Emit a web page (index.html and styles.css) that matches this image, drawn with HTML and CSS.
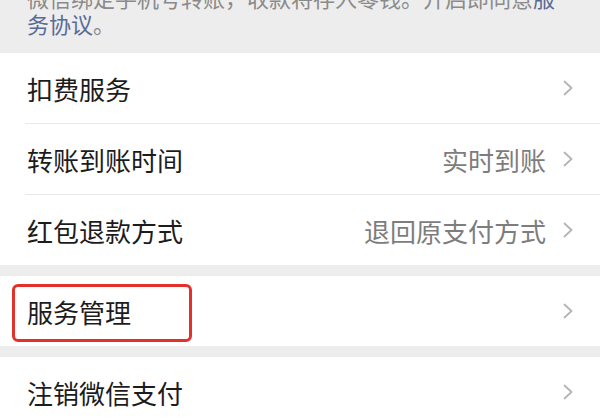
FILE: index.html
```html
<!DOCTYPE html>
<html lang="zh-CN">
<head>
<meta charset="utf-8">
<title>支付设置</title>
<link rel="stylesheet" href="styles.css">
</head>
<body>
<div class="page">
  <p class="tip">微信绑定手机号转账，收款将存入零钱。开启即同意<span class="link">服务协议</span>。</p>

  <div class="group">
    <div class="cell">
      <span class="title">扣费服务</span>
      <svg class="arrow" viewBox="0 0 10 16" width="10" height="16"><polyline points="1.5,1.5 8.5,8 1.5,14.5"/></svg>
    </div>
    <div class="cell">
      <span class="title">转账到账时间</span>
      <span class="value">实时到账</span>
      <svg class="arrow" viewBox="0 0 10 16" width="10" height="16"><polyline points="1.5,1.5 8.5,8 1.5,14.5"/></svg>
    </div>
    <div class="cell">
      <span class="title">红包退款方式</span>
      <span class="value">退回原支付方式</span>
      <svg class="arrow" viewBox="0 0 10 16" width="10" height="16"><polyline points="1.5,1.5 8.5,8 1.5,14.5"/></svg>
    </div>
  </div>

  <div class="group marked">
    <div class="cell">
      <span class="title">服务管理</span>
      <svg class="arrow" viewBox="0 0 10 16" width="10" height="16"><polyline points="1.5,1.5 8.5,8 1.5,14.5"/></svg>
    </div>
    <div class="highlight"></div>
  </div>

  <div class="group">
    <div class="cell">
      <span class="title">注销微信支付</span>
      <svg class="arrow" viewBox="0 0 10 16" width="10" height="16"><polyline points="1.5,1.5 8.5,8 1.5,14.5"/></svg>
    </div>
  </div>
</div>
</body>
</html>
```

FILE: styles.css
```css
html, body {
  margin: 0;
  padding: 0;
  background: #ededed;
  overflow: hidden;
}

body {
  font-family: "Noto Sans CJK SC", "Noto Sans", "Liberation Sans", sans-serif;
  width: 600px;
  height: 420px;
}

.page {
  margin-top: -16px;
}

.tip {
  margin: 0;
  padding: 0 40px 17px 27px;
  font-size: 22px;
  line-height: 26px;
  color: #8a8a8a;
}

.link {
  color: #576b95;
}

.group {
  background: #ffffff;
  padding-left: 25px;
  margin-bottom: 11px;
}

.group.marked {
  position: relative;
}

.cell {
  display: flex;
  align-items: center;
  height: 70px;
  padding-left: 2px;
  padding-right: 27px;
}

.cell + .cell {
  border-top: 1px solid #e8e8e8;
}

.title {
  flex: 1;
  font-size: 26px;
  color: #1c1c1c;
  white-space: nowrap;
}

.value {
  font-size: 26px;
  color: #7d7d7d;
  margin-right: 17px;
  white-space: nowrap;
}

.arrow {
  display: block;
  flex: none;
}

.arrow polyline {
  fill: none;
  stroke: #b4b4b4;
  stroke-width: 1.8;
  stroke-linecap: round;
  stroke-linejoin: round;
}

.highlight {
  position: absolute;
  left: 12px;
  top: 8px;
  width: 174px;
  height: 52px;
  border: 3px solid #e3302a;
  border-radius: 6px;
}
```
